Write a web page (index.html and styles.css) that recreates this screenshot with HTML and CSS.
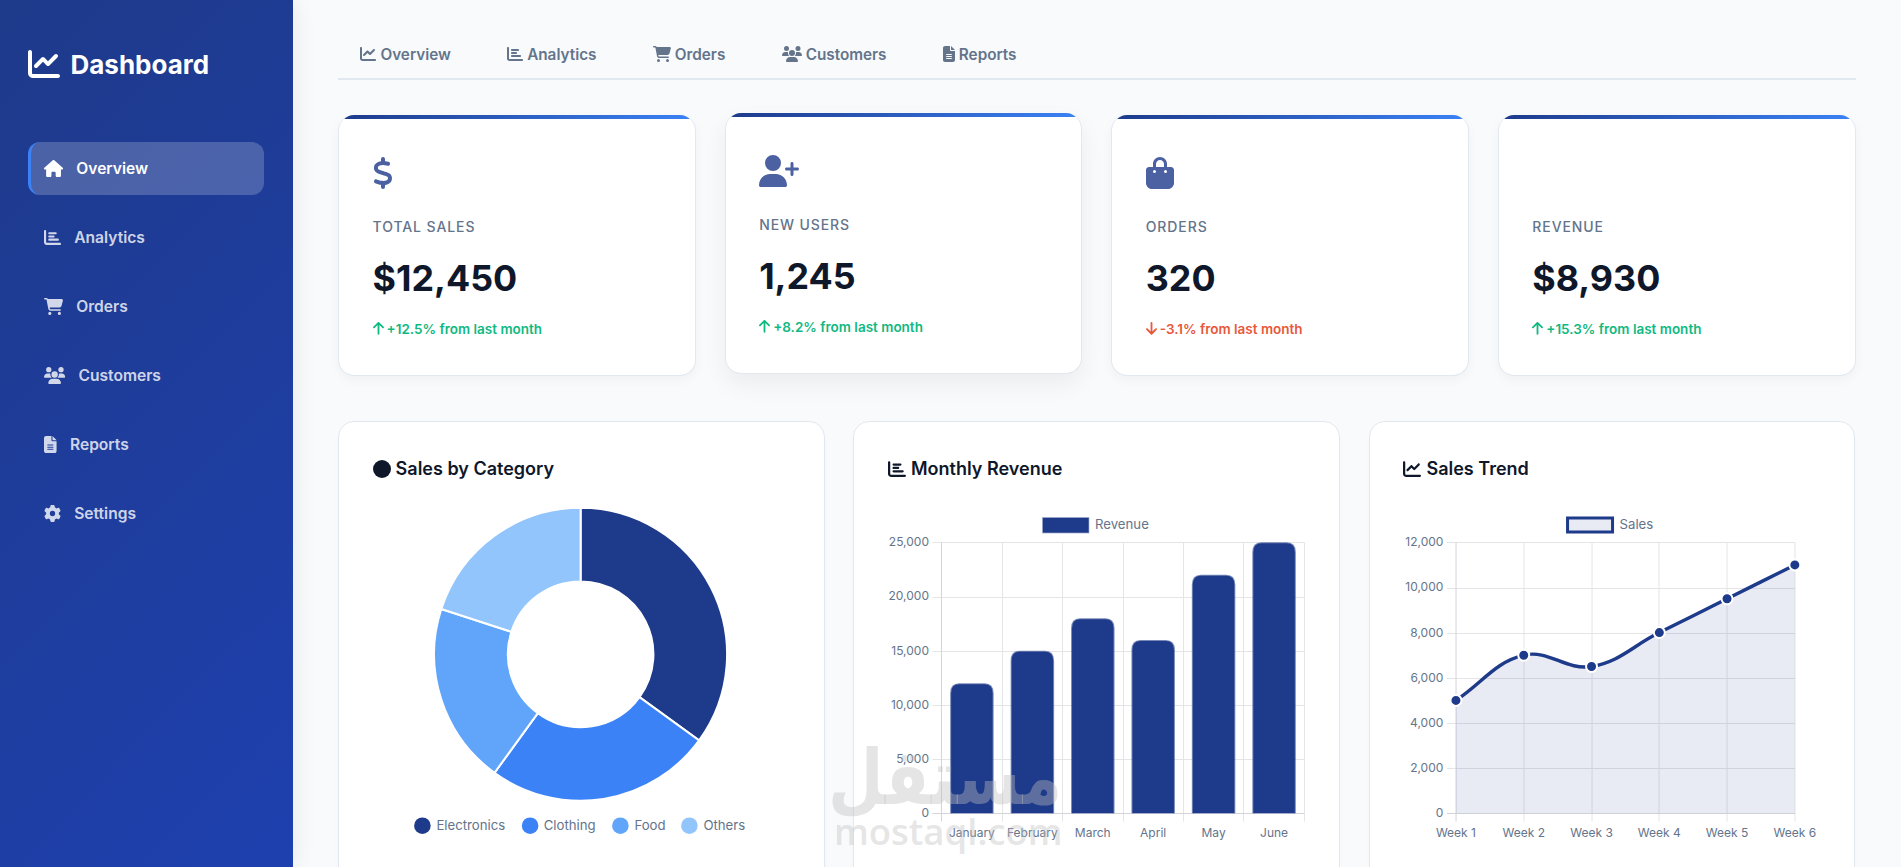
FILE: index.html
```html
<!DOCTYPE html>
<html lang="en">
<head>
<meta charset="utf-8">
<title>Dashboard</title>
<link rel="stylesheet" href="styles.css">
</head>
<body>
<svg class="sprite" xmlns="http://www.w3.org/2000/svg" aria-hidden="true">
  <symbol id="i-line" viewBox="0 0 512 512"><path d="M64 64c0-17.7-14.3-32-32-32S0 46.3 0 64V400c0 44.2 35.8 80 80 80H480c17.7 0 32-14.3 32-32s-14.3-32-32-32H80c-8.8 0-16-7.2-16-16V64zm406.6 86.6c12.5-12.5 12.5-32.8 0-45.3s-32.8-12.5-45.3 0L320 210.7l-57.4-57.4c-12.5-12.5-32.8-12.5-45.3 0l-112 112c-12.5 12.5-12.5 32.8 0 45.3s32.8 12.5 45.3 0L240 221.3l57.4 57.4c12.5 12.5 32.8 12.5 45.3 0l128-128z"/></symbol>
  <symbol id="i-bar" viewBox="0 0 512 512"><path d="M32 32c17.7 0 32 14.3 32 32V400c0 8.8 7.2 16 16 16H480c17.7 0 32 14.3 32 32s-14.3 32-32 32H80c-44.2 0-80-35.8-80-80V64C0 46.3 14.3 32 32 32zm96 96c0-17.7 14.3-32 32-32l192 0c17.7 0 32 14.3 32 32s-14.3 32-32 32l-192 0c-17.7 0-32-14.3-32-32zm32 64H288c17.7 0 32 14.3 32 32s-14.3 32-32 32H160c-17.7 0-32-14.3-32-32s14.3-32 32-32zm0 96H416c17.7 0 32 14.3 32 32s-14.3 32-32 32H160c-17.7 0-32-14.3-32-32s14.3-32 32-32z"/></symbol>
  <symbol id="i-home" viewBox="0 0 576 512"><path d="M575.8 255.5c0 18-15 32.1-32 32.1h-32l.7 160.2c0 2.7-.2 5.4-.5 8.1V472c0 22.1-17.9 40-40 40H456c-1.1 0-2.2 0-3.3-.1c-1.4 .1-2.8 .1-4.2 .1H416 392c-22.1 0-40-17.9-40-40V448 384c0-17.7-14.3-32-32-32H256c-17.7 0-32 14.3-32 32v64 24c0 22.1-17.9 40-40 40H160 128.1c-1.5 0-3-.1-4.5-.2c-1.2 .1-2.4 .2-3.6 .2H104c-22.1 0-40-17.9-40-40V360c0-.9 0-1.9 .1-2.8V287.6H32c-18 0-32-14-32-32.1c0-9 3-17 10-24L266.4 8c7-7 15-8 22-8s15 2 21 7L564.8 231.5c8 7 12 15 11 24z"/></symbol>
  <symbol id="i-cart" viewBox="0 0 576 512"><path d="M0 24C0 10.7 10.7 0 24 0H69.5c22 0 41.5 12.8 50.6 32h411c26.3 0 45.5 25 38.6 50.4l-41 152.3c-8.5 31.4-37 53.3-69.5 53.3H170.7l5.4 28.5c2.2 11.3 12.1 19.5 23.6 19.5H488c13.3 0 24 10.7 24 24s-10.7 24-24 24H199.7c-34.6 0-64.3-24.6-70.7-58.5L77.4 54.5c-.7-3.8-4-6.5-7.9-6.5H24C10.7 48 0 37.3 0 24zM128 464a48 48 0 1 1 96 0 48 48 0 1 1 -96 0zm336-48a48 48 0 1 1 0 96 48 48 0 1 1 0-96z"/></symbol>
  <symbol id="i-users" viewBox="0 0 640 512"><path d="M144 0a80 80 0 1 1 0 160A80 80 0 1 1 144 0zM512 0a80 80 0 1 1 0 160A80 80 0 1 1 512 0zM0 298.7C0 239.8 47.8 192 106.7 192h42.7c15.9 0 31 3.5 44.6 9.7c-1.3 7.2-1.9 14.7-1.9 22.3c0 38.2 16.8 72.5 43.3 96c-.2 0-.4 0-.7 0H21.3C9.6 320 0 310.4 0 298.7zM405.3 320c-.2 0-.4 0-.7 0c26.6-23.5 43.3-57.8 43.3-96c0-7.6-.7-15-1.9-22.3c13.6-6.3 28.7-9.7 44.6-9.7h42.7C592.2 192 640 239.8 640 298.7c0 11.8-9.6 21.3-21.3 21.3H405.3zM224 224a96 96 0 1 1 192 0 96 96 0 1 1 -192 0zM128 485.3C128 411.7 187.7 352 261.3 352H378.7C452.3 352 512 411.7 512 485.3c0 14.7-11.9 26.7-26.7 26.7H154.7c-14.7 0-26.7-11.9-26.7-26.7z"/></symbol>
  <symbol id="i-file" viewBox="0 0 384 512"><path d="M64 0C28.7 0 0 28.7 0 64V448c0 35.3 28.7 64 64 64H320c35.3 0 64-28.7 64-64V160H256c-17.7 0-32-14.3-32-32V0H64zM256 0V128H384L256 0zM112 256H272c8.8 0 16 7.2 16 16s-7.2 16-16 16H112c-8.8 0-16-7.2-16-16s7.2-16 16-16zm0 64H272c8.8 0 16 7.2 16 16s-7.2 16-16 16H112c-8.8 0-16-7.2-16-16s7.2-16 16-16zm0 64H272c8.8 0 16 7.2 16 16s-7.2 16-16 16H112c-8.8 0-16-7.2-16-16s7.2-16 16-16z"/></symbol>
  <symbol id="i-gear" viewBox="0 0 512 512"><path d="M495.9 166.6c3.2 8.7 .5 18.4-6.4 24.6l-43.3 39.4c1.1 8.3 1.7 16.8 1.7 25.4s-.6 17.1-1.7 25.4l43.3 39.4c6.9 6.2 9.6 15.9 6.4 24.6c-4.4 11.9-9.7 23.3-15.8 34.3l-4.7 8.1c-6.6 11-14 21.4-22.1 31.2c-5.9 7.2-15.7 9.6-24.5 6.8l-55.7-17.7c-13.4 10.3-28.2 18.9-44 25.4l-12.5 57.1c-2 9.1-9 16.3-18.2 17.8c-13.8 2.3-28 3.5-42.5 3.5s-28.7-1.2-42.5-3.5c-9.2-1.5-16.2-8.7-18.2-17.8l-12.5-57.1c-15.8-6.5-30.6-15.1-44-25.4L83.1 425.9c-8.8 2.8-18.6 .3-24.5-6.8c-8.1-9.8-15.5-20.2-22.1-31.2l-4.7-8.1c-6.1-11-11.4-22.4-15.8-34.3c-3.2-8.7-.5-18.4 6.4-24.6l43.3-39.4C64.6 273.1 64 264.6 64 256s.6-17.1 1.7-25.4L22.4 191.2c-6.9-6.2-9.6-15.9-6.4-24.6c4.4-11.9 9.7-23.3 15.8-34.3l4.7-8.1c6.6-11 14-21.4 22.1-31.2c5.9-7.2 15.7-9.6 24.5-6.8l55.7 17.7c13.4-10.3 28.2-18.9 44-25.4l12.5-57.1c2-9.1 9-16.3 18.2-17.8C227.3 1.2 241.5 0 256 0s28.7 1.2 42.5 3.5c9.2 1.5 16.2 8.7 18.2 17.8l12.5 57.1c15.8 6.5 30.6 15.1 44 25.4l55.7-17.7c8.8-2.8 18.6-.3 24.5 6.8c8.1 9.8 15.5 20.2 22.1 31.2l4.7 8.1c6.1 11 11.4 22.4 15.8 34.3zM256 336a80 80 0 1 0 0-160 80 80 0 1 0 0 160z"/></symbol>
  <symbol id="i-dollar" viewBox="0 0 320 512"><path d="M160 0c17.7 0 32 14.3 32 32V67.7c1.6 .2 3.1 .4 4.7 .7c.4 .1 .7 .1 1.1 .2l48 8.8c17.4 3.2 28.9 19.9 25.7 37.2s-19.9 28.9-37.2 25.7l-47.5-8.7c-31.3-4.6-58.9-1.5-78.3 6.2s-27.2 18.3-29 28.1c-2 10.7-.5 16.7 1.2 20.4c1.8 3.9 5.5 8.3 12.8 13.2c16.3 10.7 41.3 17.7 73.7 26.3l2.9 .8c28.6 7.6 63.6 16.8 89.6 33.8c14.2 9.3 27.6 21.9 35.9 39.5c8.5 17.9 10.3 37.9 6.4 59.2c-6.9 38-33.1 63.4-65.6 76.7c-13.7 5.6-28.6 9.2-44.4 11V480c0 17.7-14.3 32-32 32s-32-14.3-32-32V445.1c-.4-.1-.9-.1-1.3-.2l-.2 0 0 0c-24.4-3.8-64.5-14.3-91.5-26.3c-16.1-7.2-23.4-26.1-16.2-42.2s26.1-23.4 42.2-16.2c20.9 9.3 55.3 18.5 75.2 21.6c31.9 4.7 58.2 2 76-5.3c16.9-6.9 24.6-16.9 26.8-28.9c1.9-10.6 .4-16.7-1.3-20.4c-1.9-4-5.6-8.4-13-13.3c-16.4-10.7-41.5-17.7-74-26.3l-2.8-.7 0 0C119.4 279.3 84.4 270 58.4 253c-14.2-9.3-27.5-22-35.8-39.6c-8.4-17.9-10.1-37.9-6.1-59.2C23.7 116 52.3 91.2 85.1 78.2c13.4-5.3 28.1-8.9 42.9-11V32c0-17.7 14.3-32 32-32z"/></symbol>
  <symbol id="i-userplus" viewBox="0 0 640 512"><path d="M96 128a128 128 0 1 1 256 0A128 128 0 1 1 96 128zM0 482.3C0 383.8 79.8 304 178.3 304h91.4C368.2 304 448 383.8 448 482.3c0 16.4-13.3 29.7-29.7 29.7H29.7C13.3 512 0 498.7 0 482.3zM504 312V248H440c-13.3 0-24-10.7-24-24s10.7-24 24-24h64V136c0-13.3 10.7-24 24-24s24 10.7 24 24v64h64c13.3 0 24 10.7 24 24s-10.7 24-24 24H552v64c0 13.3-10.7 24-24 24s-24-10.7-24-24z"/></symbol>
  <symbol id="i-bag" viewBox="0 0 448 512"><path d="M160 112c0-35.3 28.7-64 64-64s64 28.7 64 64v48H160V112zm-48 48H48c-26.5 0-48 21.5-48 48V416c0 53 43 96 96 96H352c53 0 96-43 96-96V208c0-26.5-21.5-48-48-48H336V112C336 50.1 285.9 0 224 0S112 50.1 112 112v48zm24 48a24 24 0 1 1 0 48 24 24 0 1 1 0-48zm152 24a24 24 0 1 1 48 0 24 24 0 1 1 -48 0z"/></symbol>
  <symbol id="i-up" viewBox="0 0 384 512"><path d="M214.6 41.4c-12.5-12.5-32.8-12.5-45.3 0l-160 160c-12.5 12.5-12.5 32.8 0 45.3s32.8 12.5 45.3 0L160 141.2V448c0 17.7 14.3 32 32 32s32-14.3 32-32V141.2L329.4 246.6c12.5 12.5 32.8 12.5 45.3 0s12.5-32.8 0-45.3l-160-160z"/></symbol>
  <symbol id="i-down" viewBox="0 0 384 512"><path d="M169.4 470.6c12.5 12.5 32.8 12.5 45.3 0l160-160c12.5-12.5 12.5-32.8 0-45.3s-32.8-12.5-45.3 0L224 370.8 224 64c0-17.7-14.3-32-32-32s-32 14.3-32 32l0 306.7L54.6 265.4c-12.5-12.5-32.8-12.5-45.3 0s-12.5 32.8 0 45.3l160 160z"/></symbol>
  <symbol id="i-circle" viewBox="0 0 512 512"><circle cx="256" cy="256" r="256"/></symbol>
</svg>

<div class="app">
  <aside class="sidebar">
    <div class="logo">
      <svg class="logo-icon"><use href="#i-line"/></svg>
      <span>Dashboard</span>
    </div>
    <nav class="nav">
      <a class="nav-item active"><svg class="nav-icon w-home"><use href="#i-home"/></svg><span>Overview</span></a>
      <a class="nav-item"><svg class="nav-icon"><use href="#i-bar"/></svg><span>Analytics</span></a>
      <a class="nav-item"><svg class="nav-icon w-home"><use href="#i-cart"/></svg><span>Orders</span></a>
      <a class="nav-item"><svg class="nav-icon w-users"><use href="#i-users"/></svg><span>Customers</span></a>
      <a class="nav-item"><svg class="nav-icon w-file"><use href="#i-file"/></svg><span>Reports</span></a>
      <a class="nav-item"><svg class="nav-icon"><use href="#i-gear"/></svg><span>Settings</span></a>
    </nav>
  </aside>

  <main class="main">
    <div class="tabs">
      <a class="tab"><svg class="tab-icon"><use href="#i-line"/></svg><span>Overview</span></a>
      <a class="tab"><svg class="tab-icon"><use href="#i-bar"/></svg><span>Analytics</span></a>
      <a class="tab"><svg class="tab-icon t-cart"><use href="#i-cart"/></svg><span>Orders</span></a>
      <a class="tab"><svg class="tab-icon t-users"><use href="#i-users"/></svg><span>Customers</span></a>
      <a class="tab"><svg class="tab-icon t-file"><use href="#i-file"/></svg><span>Reports</span></a>
    </div>

    <section class="stats">
      <article class="stat">
        <div class="stat-icon"><svg class="s-dollar"><use href="#i-dollar"/></svg></div>
        <div class="stat-label">Total Sales</div>
        <div class="stat-value">$12,450</div>
        <div class="stat-change up"><svg><use href="#i-up"/></svg><span>+12.5% from last month</span></div>
      </article>
      <article class="stat raised">
        <div class="stat-icon"><svg class="s-userplus"><use href="#i-userplus"/></svg></div>
        <div class="stat-label">New Users</div>
        <div class="stat-value">1,245</div>
        <div class="stat-change up"><svg><use href="#i-up"/></svg><span>+8.2% from last month</span></div>
      </article>
      <article class="stat">
        <div class="stat-icon"><svg class="s-bag"><use href="#i-bag"/></svg></div>
        <div class="stat-label">Orders</div>
        <div class="stat-value">320</div>
        <div class="stat-change down"><svg><use href="#i-down"/></svg><span>-3.1% from last month</span></div>
      </article>
      <article class="stat">
        <div class="stat-icon"></div>
        <div class="stat-label">Revenue</div>
        <div class="stat-value">$8,930</div>
        <div class="stat-change up"><svg><use href="#i-up"/></svg><span>+15.3% from last month</span></div>
      </article>
    </section>

    <section class="charts">
      <article class="chart-card">
        <h3 class="chart-title"><svg><use href="#i-circle"/></svg><span>Sales by Category</span></h3>
        <svg class="chart" viewBox="372.6 500 417.43 360">
          <g class="slices" transform="translate(-0.5 0)">
            <path class="c1" d="M580.7 507.8A146.5 146.5 0 0 1 699.2 740.4L639.6 697.1A72.8 72.8 0 0 0 580.7 581.5Z"/>
            <path class="c2" d="M699.2 740.4A146.5 146.5 0 0 1 494.6 772.8L537.9 713.2A72.8 72.8 0 0 0 639.6 697.1Z"/>
            <path class="c3" d="M494.6 772.8A146.5 146.5 0 0 1 441.4 609L511.5 631.8A72.8 72.8 0 0 0 537.9 713.2Z"/>
            <path class="c4" d="M441.4 609A146.5 146.5 0 0 1 580.7 507.8L580.7 581.5A72.8 72.8 0 0 0 511.5 631.8Z"/>
          </g>
          <circle class="c1" cx="422" cy="825.7" r="8.3"/><text class="legend" x="436" y="830.4">Electronics</text>
          <circle class="c2" cx="529.7" cy="825.7" r="8.3"/><text class="legend" x="543.3" y="830.4">Clothing</text>
          <circle class="c3" cx="620" cy="825.7" r="8.3"/><text class="legend" x="634" y="830.4">Food</text>
          <circle class="c4" cx="689" cy="825.7" r="8.3"/><text class="legend" x="703" y="830.4">Others</text>
        </svg>
      </article>

      <article class="chart-card">
        <h3 class="chart-title"><svg><use href="#i-bar"/></svg><span>Monthly Revenue</span></h3>
        <svg class="chart" viewBox="888.03 500 417.43 360">
          <rect class="legend-bar" x="1043" y="518" width="45.5" height="14.5"/>
          <text class="legend" x="1095" y="529">Revenue</text>
          <path class="grid" d="M932.5 542.5H1304.5M932.5 597.5H1304.5M932.5 651.5H1304.5M932.5 705.5H1304.5M932.5 759.5H1304.5M1002.5 542.5V821.5M1062.5 542.5V821.5M1123.5 542.5V821.5M1183.5 542.5V821.5M1243.5 542.5V821.5M1304.5 542.5V821.5"/>
          <path class="axis" d="M941.5 542.5V821.5M932.5 813.5H1304.5"/>
          <g class="bars">
            <path d="M951.15 813.3V693.2q0-9 8-9h25.5q8 0 8 9V813.3"/>
            <path d="M1011.65 813.3V660.7q0-9 8-9h25.5q8 0 8 9V813.3"/>
            <path d="M1072.05 813.3V628.2q0-9 8-9h25.5q8 0 8 9V813.3"/>
            <path d="M1132.45 813.3V649.9q0-9 8-9h25.5q8 0 8 9V813.3"/>
            <path d="M1192.85 813.3V584.8q0-9 8-9h25.5q8 0 8 9V813.3"/>
            <path d="M1253.35 813.3V552.3q0-9 8-9h25.5q8 0 8 9V813.3"/>
          </g>
          <g class="tick end">
            <text x="929" y="546">25,000</text>
            <text x="929" y="600">20,000</text>
            <text x="929" y="655">15,000</text>
            <text x="929" y="709.3">10,000</text>
            <text x="929" y="763">5,000</text>
            <text x="929" y="817">0</text>
          </g>
          <g class="tick mid">
            <text x="971.9" y="837">January</text>
            <text x="1032.4" y="837">February</text>
            <text x="1092.8" y="837">March</text>
            <text x="1153.2" y="837">April</text>
            <text x="1213.6" y="837">May</text>
            <text x="1274.1" y="837">June</text>
          </g>
        </svg>
      </article>

      <article class="chart-card">
        <h3 class="chart-title"><svg><use href="#i-line"/></svg><span>Sales Trend</span></h3>
        <svg class="chart" viewBox="1403.46 500 417.43 360">
          <rect class="legend-line" x="1568" y="518" width="45" height="14"/>
          <text class="legend" x="1620" y="529">Sales</text>
          <path class="grid" d="M1447.5 542.5H1795.5M1447.5 588.5H1795.5M1447.5 633.5H1795.5M1447.5 678.5H1795.5M1447.5 723.5H1795.5M1447.5 768.5H1795.5M1524.5 542.5V821.5M1592.5 542.5V821.5M1659.5 542.5V821.5M1727.5 542.5V821.5M1795.5 542.5V821.5"/>
          <path class="axis" d="M1456.5 542.5V821.5M1447.5 813.5H1795.5"/>
          <path class="area" d="M1456.4 700.4C1483.5 682.3 1494.8 662.56 1524.2 655.2C1549 649 1566.2 670.8 1592 666.5C1620.5 661.75 1632.7 646.1 1659.8 632.6C1686.9 619.06 1700.4 612.3 1727.5 598.8C1754.6 585.26 1768.2 578.5 1795.3 564.9V813.3H1456.4Z"/>
          <path class="trend" d="M1456.4 700.4C1483.5 682.3 1494.8 662.56 1524.2 655.2C1549 649 1566.2 670.8 1592 666.5C1620.5 661.75 1632.7 646.1 1659.8 632.6C1686.9 619.06 1700.4 612.3 1727.5 598.8C1754.6 585.26 1768.2 578.5 1795.3 564.9"/>
          <g class="dots">
            <circle cx="1456.4" cy="700.4" r="5.5"/>
            <circle cx="1524.2" cy="655.2" r="5.5"/>
            <circle cx="1592" cy="666.5" r="5.5"/>
            <circle cx="1659.8" cy="632.6" r="5.5"/>
            <circle cx="1727.5" cy="598.8" r="5.5"/>
            <circle cx="1795.3" cy="564.9" r="5.5"/>
          </g>
          <g class="tick end">
            <text x="1443.8" y="546">12,000</text>
            <text x="1443.8" y="591">10,000</text>
            <text x="1443.8" y="637">8,000</text>
            <text x="1443.8" y="682">6,000</text>
            <text x="1443.8" y="727">4,000</text>
            <text x="1443.8" y="772">2,000</text>
            <text x="1443.8" y="817">0</text>
          </g>
          <g class="tick mid">
            <text x="1456.4" y="837">Week 1</text>
            <text x="1524.2" y="837">Week 2</text>
            <text x="1592" y="837">Week 3</text>
            <text x="1659.8" y="837">Week 4</text>
            <text x="1727.5" y="837">Week 5</text>
            <text x="1795.3" y="837">Week 6</text>
          </g>
        </svg>
      </article>
    </section>
  </main>

  <div class="watermark">
    <div class="wm-ar" lang="ar" dir="rtl">مستقل</div>
    <div class="wm-en">mostaql.com</div>
  </div>
</div>
</body>
</html>
```

FILE: styles.css
```css
* { box-sizing: border-box; margin: 0; padding: 0; }

html, body {
  height: 100%;
  overflow: hidden;
  font-family: "Inter", "Liberation Sans", sans-serif;
  background: #f8fafc;
  color: #0f172a;
}

.sprite { position: absolute; width: 0; height: 0; }

svg { fill: currentColor; display: block; flex: none; }

.app { display: flex; height: 100vh; position: relative; overflow: hidden; }

/* Sidebar */
.sidebar {
  width: 293px;
  flex: none;
  padding: 46px 29px 0 28px;
  background: linear-gradient(135deg, #1e3a8a 0%, #1e40af 100%);
  box-shadow: 4px 0 20px rgba(0, 0, 0, 0.06);
  color: #fff;
  position: relative;
}

.logo {
  display: flex;
  align-items: center;
  gap: 10.5px;
  height: 36px;
  margin-bottom: 60px;
  font-size: 26px;
  font-weight: 700;
}

.logo-icon { width: 32px; height: 32px; }

.nav { display: flex; flex-direction: column; gap: 16px; }

.nav-item {
  display: flex;
  align-items: center;
  gap: 12.8px;
  height: 53px;
  padding-left: 13.4px;
  border-left: 3px solid transparent;
  border-radius: 12px;
  font-size: 15.6px;
  font-weight: 600;
  color: rgba(255, 255, 255, 0.8);
}

.nav-item.active {
  background: rgba(255, 255, 255, 0.2);
  border-left-color: #3b82f6;
  color: #fff;
}

.nav-icon { width: 17px; height: 17px; }
.nav-icon.w-home { width: 19.1px; }
.nav-icon.w-users { width: 21.25px; }
.nav-icon.w-file { width: 12.75px; }

/* Main */
.main {
  flex: 1;
  min-width: 0;
  padding: 30px 45.5px 0 45px;
}

.tabs {
  display: flex;
  gap: 11.5px;
  height: 50px;
  margin-bottom: 35px;
  border-bottom: 2px solid #e2e8f0;
}

.tab {
  display: flex;
  align-items: center;
  gap: 4px;
  height: 48px;
  padding: 0 22.4px;
  font-size: 15.3px;
  font-weight: 600;
  color: #64748b;
}

.tab-icon { width: 16px; height: 16px; }
.tab-icon.t-cart { width: 18px; }
.tab-icon.t-users { width: 20px; }
.tab-icon.t-file { width: 12px; }

/* Stat cards */
.stats {
  display: grid;
  grid-template-columns: repeat(4, 1fr);
  gap: 28.8px;
  margin-bottom: 45px;
}

.stat {
  position: relative;
  height: 261px;
  padding: 41.6px 33.6px 0;
  background: #fff;
  border: 1px solid #e2e8f0;
  border-top: 0;
  border-radius: 16px;
  overflow: hidden;
  box-shadow: 0 4px 12px rgba(0, 0, 0, 0.04);
}

.stat::before {
  content: "";
  position: absolute;
  inset: 0 0 auto 0;
  height: 4px;
  background: linear-gradient(90deg, #1e3a8a, #3b82f6);
}

.stat.raised {
  transform: translateY(-2px);
  box-shadow: 0 10px 25px rgba(0, 0, 0, 0.06);
}

.stat-icon { height: 32px; margin-bottom: 27px; color: #4b61a1; }
.stat-icon svg { height: 32px; }
.s-dollar { width: 20px; }
.s-userplus { width: 40px; }
.s-bag { width: 28px; }

.stat-label {
  height: 22px;
  font-size: 14px;
  line-height: 22px;
  font-weight: 500;
  letter-spacing: 0.9px;
  text-transform: uppercase;
  color: #64748b;
  margin-bottom: 17px;
}

.stat-value {
  height: 46px;
  font-size: 35.8px;
  line-height: 46px;
  font-weight: 700;
  color: #0f172a;
  margin-bottom: 18px;
}

.stat-change {
  display: flex;
  align-items: center;
  gap: 3px;
  height: 20px;
  font-size: 13.5px;
  font-weight: 600;
}

.stat-change svg { width: 11px; height: 14.6px; }
.stat-change.up { color: #10b981; }
.stat-change.down { color: #e8583a; }

/* Chart cards */
.charts {
  display: grid;
  grid-template-columns: repeat(3, 1fr);
  gap: 28.8px;
}

.chart-card {
  padding: 33.6px;
  height: 500px;
  background: #fff;
  border: 1px solid #e2e8f0;
  border-radius: 16px;
  box-shadow: 0 4px 6px rgba(0, 0, 0, 0.02);
}

.chart-title {
  display: flex;
  align-items: center;
  gap: 5px;
  height: 26px;
  margin-bottom: 18.4px;
  font-size: 18px;
  font-weight: 600;
  color: #0f172a;
}

.chart-title svg { width: 18px; height: 18px; }

.chart { width: 100%; height: 360px; }

.chart text { font-family: "Inter", "Liberation Sans", sans-serif; }

.legend { font-size: 13.2px; fill: #64748b; }

.tick { font-size: 12px; fill: #64748b; }
.tick.end { text-anchor: end; }
.tick.mid { text-anchor: middle; }

.slices path { stroke: #fff; stroke-width: 2; }
.c1 { fill: #1e3a8a; }
.c2 { fill: #3b82f6; }
.c3 { fill: #60a5fa; }
.c4 { fill: #93c5fd; }

.grid { fill: none; stroke: #e5e5e8; stroke-width: 1; }
.axis { fill: none; stroke: #d2d3dc; stroke-width: 1; }

.bars path { fill: #1e3a8a; stroke: rgba(30, 58, 138, 0.6); stroke-width: 2; }

.legend-bar { fill: #1e3a8a; stroke: rgba(30, 58, 138, 0.6); stroke-width: 1.5; }
.legend-line { fill: rgba(30, 58, 138, 0.1); stroke: #1e3a8a; stroke-width: 3; }

.area { fill: rgba(30, 58, 138, 0.1); stroke: none; }
.trend { fill: none; stroke: #1e3a8a; stroke-width: 3.4; }
.dots circle { fill: #1e3a8a; stroke: #fff; stroke-width: 2; }

/* Watermark */
.watermark {
  position: absolute;
  left: 834px;
  top: 740px;
  width: 228px;
  text-align: center;
  color: rgba(190, 190, 190, 0.4);
  pointer-events: none;
}

.wm-ar {
  height: 76px;
  font-family: "DejaVu Sans", sans-serif;
  font-size: 64px;
  line-height: 76px;
  font-weight: 700;
  transform: scaleY(1.2);
}

.wm-en {
  font-family: "Open Sans", "Inter", sans-serif;
  font-size: 36.5px;
  line-height: 30px;
  font-weight: 600;
}
```
